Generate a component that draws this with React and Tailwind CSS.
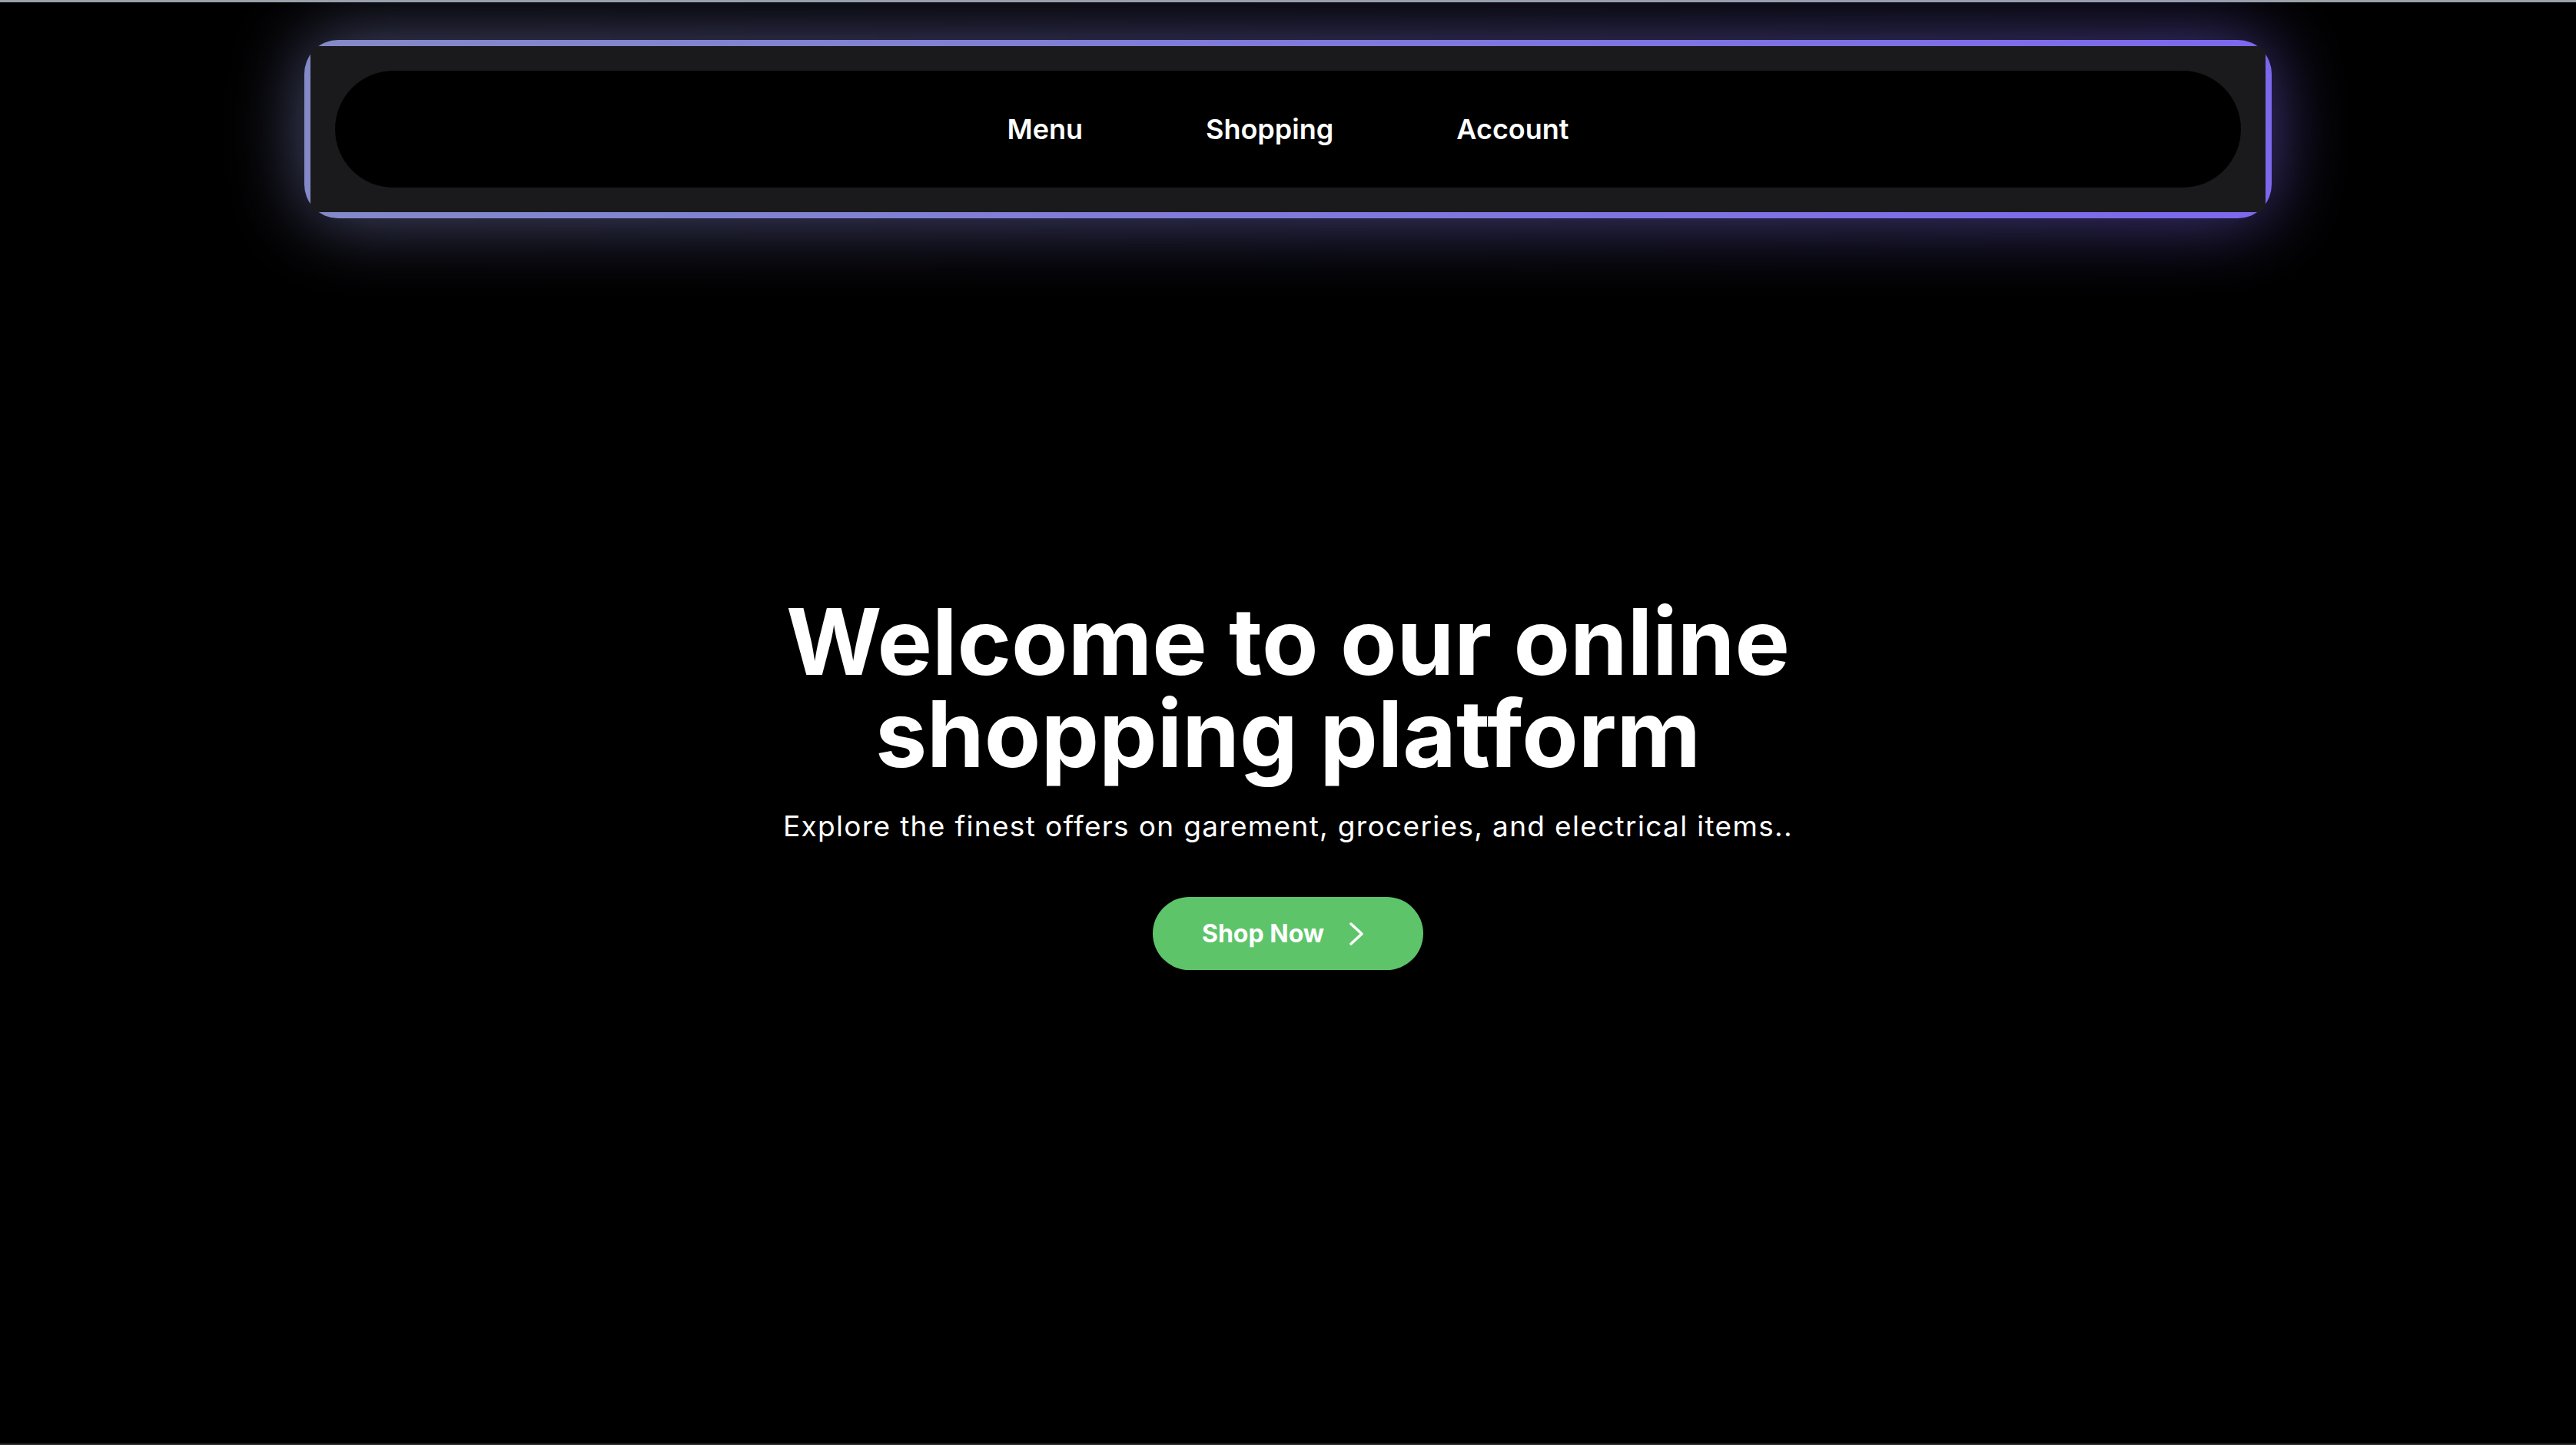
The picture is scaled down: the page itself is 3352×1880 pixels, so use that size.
import React from "react";

const links = ["Menu", "Shopping", "Account"];

export default function App() {
  return (
    <div className="min-h-screen bg-black flex flex-col font-['Inter','Noto_Sans',sans-serif] text-white">
      {/* window edge */}
      <div className="h-[3px] bg-[#9aa3ab]" />

      {/* HEADER */}
      <header className="pt-[49px] flex justify-center">
        <div className="relative w-[2560px]">
          <div className="absolute inset-0 rounded-[44px] bg-gradient-to-r from-[#8489c8] to-[#7c68ec] blur-[50px] opacity-60" />
          <div className="relative rounded-[44px] bg-gradient-to-r from-[#8489c8] to-[#7c68ec] p-[8px]">
            <div className="rounded-[12px] bg-[#1a1a1c] p-[32px]">
              <nav className="h-[152px] rounded-full bg-black flex items-center justify-center">
                {links.map((link) => (
                  <a
                    key={link}
                    href="#"
                    className="px-[80px] text-[36px] font-semibold leading-none"
                  >
                    {link}
                  </a>
                ))}
              </nav>
            </div>
          </div>
        </div>
      </header>

      {/* HERO */}
      <main className="flex-1 flex flex-col items-center text-center pt-[491px]">
        <h1 className="text-[120px] leading-none font-bold">
          Welcome to our online
          <br />
          shopping platform
        </h1>
        <p className="mt-[32px] text-[37px] leading-[56px] tracking-[0.036em]">
          Explore the finest offers on garement, groceries, and electrical items..
        </p>
        <button className="mt-[64px] h-[95px] rounded-full bg-[#5ec46a] pl-[64px] pr-[78px] flex items-center text-[32px] font-bold">
          Shop Now
          <svg
            width="18"
            height="30"
            viewBox="0 0 18 30"
            fill="none"
            stroke="white"
            strokeWidth="3.5"
            strokeLinecap="round"
            strokeLinejoin="round"
            className="ml-[33px]"
          >
            <polyline points="2,2 16,15 2,28" />
          </svg>
        </button>
      </main>

      <div className="h-[2px] bg-[#2e2e2e]" />
    </div>
  );
}
